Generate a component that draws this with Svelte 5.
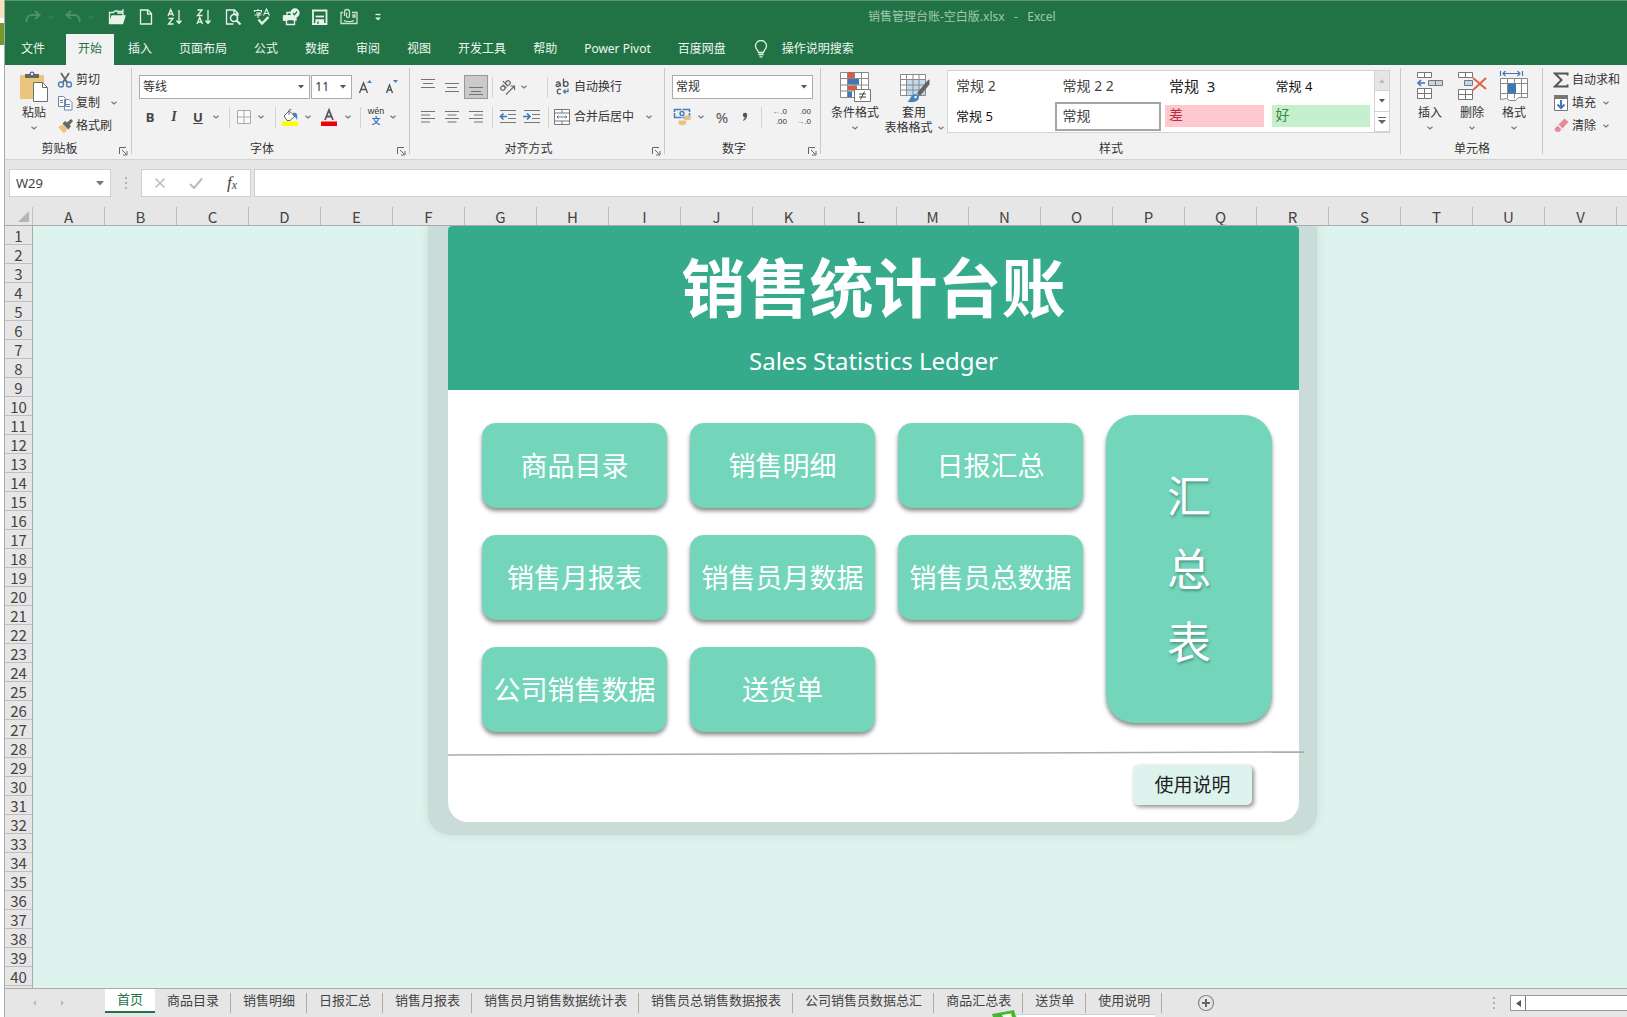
<script>
  const ribbonTabs = ['插入', '页面布局', '公式', '数据', '审阅', '视图', '开发工具', '帮助', 'Power Pivot', '百度网盘'];
  const quickTools = [
    ['open', '打开'], ['new', '新建'], ['az', '升序'], ['za', '降序'], ['preview', '打印预览'],
    ['spell', '拼写检查'], ['print', '快速打印'], ['save', '保存'], ['mail', '电子邮件'], ['more', '自定义']
  ];
  const columns = 'ABCDEFGHIJKLMNOPQRSTUV'.split('');
  const rows = Array.from({ length: 40 }, (_, i) => i + 1);
  const tiles = ['商品目录', '销售明细', '日报汇总', '销售月报表', '销售员月数据', '销售员总数据', '公司销售数据', '送货单'];
  const sheets = ['首页', '商品目录', '销售明细', '日报汇总', '销售月报表', '销售员月销售数据统计表', '销售员总销售数据报表', '公司销售员数据总汇', '商品汇总表', '送货单', '使用说明'];
  const styles = [
    ['常规 2', 'plain'], ['常规 2 2', 'plain'], ['常规  3', 'large'], ['常规 4', 'dark'],
    ['常规 5', 'dark'], ['常规', 'current'], ['差', 'bad'], ['好', 'good']
  ];
  let active = $state('首页');
  let cell = $state('W29');
  let formula = $state('');
</script>

{#snippet chevron()}
  <svg class="chev" width="6" height="4" viewBox="0 0 6 4"><path d="M.5.7 3 3 5.5.7" fill="none" stroke="#777" stroke-width="1.2" /></svg>
{/snippet}

{#snippet caret()}
  <svg class="caret" width="6" height="4" viewBox="0 0 6 4"><path d="M0 0h6L3 3.6z" fill="#555" /></svg>
{/snippet}

{#snippet launcher(label)}
  <button class="launch" aria-label={label}>
    <svg width="9" height="9" viewBox="0 0 9 9" fill="none" stroke="#666"><path d="M.5 7V.5H7M3 3l4 4M8 4v4H4" /></svg>
  </button>
{/snippet}

{#snippet lines(kind)}
  <svg width="16" height="16" viewBox="0 0 16 16" stroke="#737373" fill="none">
    {#if kind === 'top'}<path d="M1 .5h14M3 4.5h10M1 8.5h14" />
    {:else if kind === 'middle'}<path d="M1 4.5h14M3 8.5h10M1 12.5h14" />
    {:else if kind === 'bottom'}<path d="M1 8.5h14M3 12.5h10M1 15.5h14" />
    {:else if kind === 'left'}<path d="M1 2.5h14M1 6h9M1 9.5h14M1 13h9" />
    {:else if kind === 'center'}<path d="M1 2.5h14M3.500 6h9M1 9.5h14M3.500 13h9" />
    {:else}<path d="M1 2.500h14M6 6h9M1 9.5h14M6 13h9" />{/if}
  </svg>
{/snippet}

{#snippet quick(kind)}
  <svg width="18" height="18" viewBox="0 0 18 18" fill="none" stroke="#e6f2ea" stroke-width="1.3">
    {#if kind === 'open'}<path d="M1.500 15V4.500h4l1.500-1.500h3v2h5V8" /><path d="M1.500 15 4 8h13l-2.500 7.500h-13z" fill="#e6f2ea" /><path d="M11 3.500h4V1" />
    {:else if kind === 'new'}<path d="M3.500 2h7.500l3.500 3.500V16h-11zM10.500 2v4h4" />
    {:else if kind === 'az'}<path d="M2 8 4.700 1.500 7.500 8M3 6h3.500M2.500 10.500h4.500L2.500 16h5M13 2v13M10.500 12.500 13 15.500l2.500-3" />
    {:else if kind === 'za'}<path d="M2.500 2h4.500L2.500 7.500h5M2 16l2.700-6.500L7.500 16M3 14h3.500M13 2v13M10.500 12.500 13 15.500l2.500-3" />
    {:else if kind === 'preview'}<path d="M14 8V5.500L10.500 2h-8v14h7M10 2v4h4" /><circle cx="10" cy="10" r="3.500" stroke-width="1.600" /><path d="m12.500 12.500 4 4" stroke-width="2.200" />
    {:else if kind === 'spell'}<path d="M1.500 4V2.500h7V4M5 1v1.500M3 5h4.500L5 6.500V10M1.500 7h7M10.500 7.500 13.500 1l3 6.500M11.500 5.500h4" stroke-width="1.100" /><path d="m5.500 11.500 3.500 4 6.500-6.500" stroke-width="2.400" />
    {:else if kind === 'print'}<path d="M5 8V4.500h4M5 12H1.500V8h10M4.500 11.500v5h8v-5z" /><path d="M2 8h12v4h-2v-1H5v1H2z" fill="#e6f2ea" /><circle cx="13" cy="5" r="4" fill="#e6f2ea" /><path d="m11 5 1.500 1.800L15 3.500" stroke="#217346" />
    {:else if kind === 'save'}<path d="M2 2.500h13.500v13.500H2z" stroke-width="1.800" /><path d="M4.500 8.500h8.500" stroke-width="1.800" /><path d="M5 12h7.500v4H5z" fill="#e6f2ea" /><path d="M7 13.500v2.500" stroke="#217346" />
    {:else if kind === 'mail'}<g opacity=".85"><path d="M3 4.500H1v11h16v-11h-5M13 7h2v2h-2z" /><path d="M4.500 8V4a2.500 2.500 0 0 1 5 0v4a1.500 1.500 0 0 1-3 0V4.500M4 12.500c2 1.500 8 1.500 10 0" /></g>
    {:else if kind === 'more'}<path d="M6.500 6.500h5" /><path d="M6 9.500h6L9 12.500z" fill="#e6f2ea" stroke="none" />
    {:else if kind === 'redo'}<path d="M2.500 14c-.5-5 2-7 6-7h6M11 3l4.500 4-4.500 4" stroke="#4d8f69" stroke-width="2" />
    {:else}<path d="M15.500 14c.5-5-2-7-6-7h-6M7 3 2.500 7 7 11" stroke="#4d8f69" stroke-width="2" />{/if}
  </svg>
{/snippet}

<div class="screen">
  <div class="behind" aria-hidden="true"><i class="cream"></i><i class="olive"></i></div>
  <div class="window">
    <header>
      <div class="titlebar">
        <button class="w22" aria-label="恢复">{@render quick('redo')}</button>
        <button class="w14 dim" aria-label="恢复选项">{@render chevron()}</button>
        <button class="w22" aria-label="撤消">{@render quick('undo')}</button>
        <button class="w14 dim" aria-label="撤消选项">{@render chevron()}</button>
        {#each quickTools as [kind, label]}
          <button class="w29" aria-label={label}>{@render quick(kind)}</button>
        {/each}
        <span class="doc">销售管理台账-空白版.xlsx&nbsp;&nbsp; -&nbsp;&nbsp; Excel</span>
      </div>
      <nav class="tabs">
        <button class="file">文件</button>
        <button class="on">开始</button>
        {#each ribbonTabs as t}<button>{t}</button>{/each}
        <button class="tell">
          <svg width="14" height="18" viewBox="0 0 14 18" fill="none" stroke="#e6f2ea" stroke-width="1.300"><path d="M4.500 12.500C4.500 10 1.500 9.500 1.500 6a5.500 5.500 0 0 1 11 0c0 3.500-3 4-3 6.500zM4.500 14.500h5M5.500 16.800h3" /></svg>
          操作说明搜索
        </button>
      </nav>
    </header>

    <div class="ribbon">
      <section class="group clip">
        <div class="content">
          <button class="big paste">
            <svg width="30" height="32" viewBox="0 0 30 32"><path d="M1 4h24v24H1z" fill="#ecc57d" /><path d="M6 7V3h4.500a2.500 2.500 0 0 1 5 0H20v4z" fill="#666" /><circle cx="13" cy="3" r="1.200" fill="#f2f2f2" /><path d="M14.500 11.500h9l5 5v14h-14z" fill="#fff" stroke="#6e6e6e" /><path d="M23.500 11.500v5h5" fill="none" stroke="#6e6e6e" /></svg>
            <span>粘贴</span>{@render chevron()}
          </button>
          <div class="list">
            <button><svg width="16" height="16" viewBox="0 0 16 16" fill="none"><path d="M4 1l6.500 10M12 1 5.500 11" stroke="#666" stroke-width="1.800" /><circle cx="4" cy="12.500" r="2.500" stroke="#4a80b5" stroke-width="1.400" /><circle cx="12" cy="12.500" r="2.500" stroke="#4a80b5" stroke-width="1.400" /></svg>剪切</button>
            <button><svg width="16" height="16" viewBox="0 0 16 16" fill="#fff" stroke="#6f87a0"><path d="M1.500 1.500h5l2 2v8h-7zM7.500 4.500h4.500l3 3v7.500H7.500z" /><path d="M3 5.500h3M3 7.500h3M9 9.500h4M9 11.500h4" stroke="#4a80b5" /></svg>复制<i class="w22">{@render chevron()}</i></button>
            <button><svg width="16" height="16" viewBox="0 0 16 16"><path d="m1 9 5-2.500 4.500 4.500L7 15.500z" fill="#ecc57d" /><path d="M5.500 5.500 8 3l2 1.500L14 1l2 2-3.500 4L14 8l-2.500 3.500z" fill="#666" /></svg>格式刷</button>
          </div>
        </div>
        <div class="caption"><span>剪贴板</span>{@render launcher('剪贴板选项')}</div>
      </section>

      <section class="group font">
        <div class="content col">
          <div class="row">
            <label class="combo wide"><select aria-label="字体"><option>等线</option></select>{@render caret()}</label>
            <label class="combo size"><select aria-label="字号"><option>11</option></select>{@render caret()}</label>
            <button class="w26" aria-label="增大字号"><svg width="14" height="16" viewBox="0 0 14 16"><path d="M1.500 14 5.500 4l4 10M3 10.500h5" fill="none" stroke="#555" stroke-width="1.400" /><path d="m9 4 2.500-3L14 4z" fill="#4a80b5" /></svg></button>
            <button class="w26" aria-label="减小字号"><svg width="14" height="16" viewBox="0 0 14 16"><path d="M2.500 14 5.500 6l3 8M3.500 11h4" fill="none" stroke="#555" stroke-width="1.400" /><path d="m9 1 2.500 3L14 1z" fill="#4a80b5" /></svg></button>
          </div>
          <div class="row">
            <button class="w24 fmt b">B</button><button class="w24 fmt i">I</button><button class="w24 fmt u">U</button>
            <button class="w12" aria-label="下划线选项">{@render chevron()}</button><i class="sep w14"></i>
            <button class="w16" aria-label="边框"><svg width="14" height="14" viewBox="0 0 14 14" fill="#fafafa" stroke="#aaa"><path d="M.5.500h13v13H.5zM7 .5v13M.5 7h13" /></svg></button>
            <button class="w18" aria-label="边框选项">{@render chevron()}</button><i class="sep w10"></i>
            <button class="w20" aria-label="填充颜色"><svg width="18" height="18" viewBox="0 0 18 18"><path d="M1 13.500h16V18H1z" fill="#ff0" /><path d="m3 8 5-5 6 5-5 4.500H6z" fill="#fff" stroke="#666" /><path d="M8 7V2a1.500 1.500 0 0 1 2.500 0" fill="none" stroke="#666" /><path d="M12 5c4-1 5 2 4 7-1-2-2-4-4-4z" fill="#4a80b5" /></svg></button>
            <button class="w16" aria-label="填充选项">{@render chevron()}</button>
            <button class="w26" aria-label="字体颜色"><svg width="18" height="18" viewBox="0 0 18 18"><path d="M1 13.500h16V18H1z" fill="#f00008" /><path d="M5 12 9 2l4 10M6.500 8.500h5" fill="none" stroke="#5a5a5a" stroke-width="1.800" /></svg></button>
            <button class="w12" aria-label="颜色选项">{@render chevron()}</button><i class="sep w12"></i>
            <button class="w20 pinyin"><span>wén</span><b>文</b></button>
            <button class="w14" aria-label="拼音选项">{@render chevron()}</button>
          </div>
        </div>
        <div class="caption"><span>字体</span>{@render launcher('字体选项')}</div>
      </section>

      <section class="group align">
        <div class="content col">
          <div class="row">
            <button class="w24" aria-label="顶端对齐">{@render lines('top')}</button>
            <button class="w24" aria-label="垂直居中">{@render lines('middle')}</button>
            <button class="w24 pressed" aria-label="底端对齐">{@render lines('bottom')}</button><i class="sep w8"></i>
            <button class="w22" aria-label="方向"><svg width="17" height="17" viewBox="0 0 17 17" fill="none" stroke="#666" stroke-width="1.200"><g transform="rotate(-45 6 7)"><circle cx="3" cy="7" r="2.200" /><path d="M5.500 4.500v5M8 2v7.500" /><circle cx="10.200" cy="7" r="2.200" /></g><path d="M7 15.500 15 7.500M11.500 7h4v4" /></svg></button>
            <button class="w12" aria-label="方向选项">{@render chevron()}</button><i class="w12"></i><i class="sep w10"></i>
            <button class="text"><svg width="20" height="18" viewBox="0 0 20 18" fill="none" stroke="#555" stroke-width="1.300"><path d="M4 4.500c3.500-1.500 4.500 0 4.500 4M8.500 6C3 5 3 9.500 6.500 8.300l2-1.300M11.500.5v8" /><circle cx="13.800" cy="6" r="2.300" /><path d="M9 11.500c-5-2-5 6 0 4" /><path d="M16 10.500v3h-4M13.500 11.500l-2 2 2 2" stroke="#4a80b5" /></svg>自动换行</button>
          </div>
          <div class="row">
            <button class="w24" aria-label="左对齐">{@render lines('left')}</button>
            <button class="w24" aria-label="居中">{@render lines('center')}</button>
            <button class="w24" aria-label="右对齐">{@render lines('right')}</button><i class="sep w8"></i>
            <button class="w24" aria-label="减少缩进"><svg width="18" height="14" viewBox="0 0 18 14" fill="none" stroke="#777"><path d="M1 .5h16M9 4.500h8M9 8.500h8M1 12.500h16" /><path d="M1.500 6.500H8M4.500 3.500l-3 3 3 3" stroke="#3b78b8" stroke-width="1.600" /></svg></button>
            <button class="w24" aria-label="增加缩进"><svg width="18" height="14" viewBox="0 0 18 14" fill="none" stroke="#777"><path d="M1 .5h16M9 4.500h8M9 8.500h8M1 12.500h16" /><path d="M0 6.500h7M4 3.500l3 3-3 3" stroke="#3b78b8" stroke-width="1.600" /></svg></button><i class="sep w8"></i>
            <button class="text"><svg width="20" height="16" viewBox="0 0 20 16" fill="#fff" stroke="#777"><path d="M2.500.5h15v15h-15zM2.500 4h15M2.500 12h15M10 .5V4M10 12v3.500" /><path d="M5 8h10M6.500 6.500 5 8l1.500 1.500M13.500 6.500 15 8l-1.500 1.500" stroke="#4a80b5" fill="none" /></svg>合并后居中<i class="w26">{@render chevron()}</i></button>
          </div>
        </div>
        <div class="caption"><span>对齐方式</span>{@render launcher('对齐选项')}</div>
      </section>

      <section class="group number">
        <div class="content col">
          <div class="row"><label class="combo full"><select aria-label="数字格式"><option>常规</option></select>{@render caret()}</label></div>
          <div class="row">
            <button class="w22" aria-label="会计格式"><svg width="18" height="18" viewBox="0 0 18 18"><path d="M1.500 1.500h15v8h-15z" fill="#e8eff6" stroke="#4a80b5" stroke-width="1.600" /><path d="M0 4.500h3M15 4.500h3M9 0v3M9 8v3" stroke="#f2f2f2" /><circle cx="9" cy="5.500" r="2" fill="none" stroke="#4a80b5" stroke-width="1.400" /><path d="M11 7.500h6.500V12H11zM5.500 12.500H13V16l-3.500 1.500L5.500 16z" fill="#ecc08a" /></svg></button>
            <button class="w16" aria-label="货币选项">{@render chevron()}</button>
            <button class="w26 pct">%</button>
            <button class="w20" aria-label="千位分隔"><svg width="8" height="10" viewBox="0 0 8 10"><circle cx="4" cy="3" r="2.200" fill="#555" /><path d="M6 3c0 3-1 4.500-3.500 6L2 8c1.300-1 1.800-2 1.800-3.500z" fill="#555" /></svg></button><i class="sep w12"></i>
            <button class="w20 dec"><span><b>←</b>.0</span><span>.00</span></button>
            <button class="w24 dec"><span>.00</span><span><b>→</b>.0</span></button>
          </div>
        </div>
        <div class="caption"><span>数字</span>{@render launcher('数字选项')}</div>
      </section>

      <section class="group styles">
        <div class="content">
          <button class="big cond">
            <svg width="32" height="32" viewBox="0 0 32 32"><path d="M1.500 1.500h28v25h-28zM8.500 1.500v25M15.500 1.500v25M22.500 1.500v25M1.500 7.500h28M1.500 14h28M1.500 20h28" fill="#fff" stroke="#8a8a8a" /><path d="M9 1h6v6H9zM9 14.500h9v5H9z" fill="#d0603f" /><path d="M9 8h11v5.500H9zM9 20.500h4V26H9z" fill="#3f78b4" /><path d="M15.500 18.500h16v12h-16z" fill="#fff" stroke="#777" /><path d="M20 23h7M20 26h7M25.500 20.500l-4 8" fill="none" stroke="#444" /></svg>
            <span>条件格式</span>{@render chevron()}
          </button>
          <button class="big fmtTable">
            <svg width="32" height="32" viewBox="0 0 32 32"><path d="M2.500 3.500h25v21h-25z" fill="#fff" /><path d="M9 9h18v15H9z" fill="#c5d9ee" /><path d="M2.500 3.500h25v21h-25zM8.500 3.500v21M15 3.500v21M21 3.500v21M2.500 8.500h25M2.500 14h25M2.500 19h25" fill="none" stroke="#8a8a8a" /><path d="m19 22 11-13 1.500-.5v5L22 25z" fill="#666" /><path d="M9 31c3-1 3-7 8-8 4 0 5 3 3 6-3 3-7 2-11 2z" fill="#4583bf" /><circle cx="17.500" cy="26" r="1.200" fill="#fff" /></svg>
            <span>套用</span><span class="second">表格格式{@render chevron()}</span>
          </button>
          <div class="gallery">
            <div class="cells">
              {#each styles as [name, kind]}<button class={kind}>{name}</button>{/each}
            </div>
            <div class="scroller">
              <button class="off" aria-label="上一行"><svg width="6" height="4" viewBox="0 0 6 4"><path d="M0 4h6L3 0z" fill="#bbb" /></svg></button>
              <button aria-label="下一行">{@render caret()}</button>
              <button aria-label="其他"><svg width="8" height="8" viewBox="0 0 8 8"><path d="M0 0h8v1H0zM0 3h8L4 7z" fill="#666" /></svg></button>
            </div>
          </div>
        </div>
        <div class="caption"><span>样式</span></div>
      </section>

      <section class="group cellsGroup">
        <div class="content">
          <button class="big narrow">
            <svg width="30" height="32" viewBox="0 0 30 32" fill="#fff" stroke="#777"><path d="M2.500 1.500h14v5h-14zM9.500 1.500v5M2.500 17.500h14v10h-14zM9.500 17.500v10M2.500 22.500h14" /><path d="M13.500 9.500h14v5h-14zM20.500 9.500v5" fill="#c5d6e6" /><path d="M3 12h7M6 9l-3 3 3 3" fill="none" stroke="#3f78b4" stroke-width="1.600" /></svg>
            <span>插入</span>{@render chevron()}
          </button>
          <button class="big narrow">
            <svg width="30" height="32" viewBox="0 0 30 32" fill="#fff" stroke="#777"><path d="M1.500 1.500h14v5h-14zM8.500 1.500v5M1.500 18.500h14v10h-14zM8.500 18.500v10M1.500 23.500h14" /><path d="M7.500 9.500h8v5h-8z" fill="#c5d6e6" /><path d="m16 7 13 11M29 7 16 19" fill="none" stroke="#dd6444" stroke-width="2" /></svg>
            <span>删除</span>{@render chevron()}
          </button>
          <button class="big narrow">
            <svg width="30" height="32" viewBox="0 0 30 32" fill="#fff" stroke="#888"><path d="M1.500 7.500h27v19h-9l-3 3h-6l-3-2-6 1zM8.500 7.500v20M15.500 7.500v20M22.500 7.500v19M1.500 12.500h27M1.500 22.500h27" /><path d="M9 12.500h8v10H9z" fill="#3f78b4" stroke="none" /><path d="M1.500 0v5M23.500 0v5M4 2.500h17M6.500 0 4 2.500 6.500 5M18.500 0 21 2.500 18.500 5" fill="none" stroke="#3f78b4" stroke-width="1.200" /></svg>
            <span>格式</span>{@render chevron()}
          </button>
        </div>
        <div class="caption"><span>单元格</span></div>
      </section>

      <section class="group edit">
        <div class="content">
          <div class="list">
            <button><svg width="16" height="16" viewBox="0 0 16 16" fill="none" stroke="#555" stroke-width="2"><path d="M14.500 3.500V1.500H2L8.500 8 2 14.500h12.500v-2" /></svg>自动求和</button>
            <button><svg width="16" height="16" viewBox="0 0 16 16"><path d="M1.500 1h13v14.500h-13z" fill="#fff" stroke="#777" /><path d="M1 0h14v4H1z" fill="#777" /><path d="M8 5v8M4.500 9.500 8 13l3.500-3.500" fill="none" stroke="#3f78b4" stroke-width="2" /></svg>填充<i class="w14">{@render chevron()}</i></button>
            <button><svg width="16" height="16" viewBox="0 0 16 16"><path d="m5.500 6.500 6-6 4 3.500-6 6.500z" fill="#e8899a" /><path d="m4.500 7.500 4 4-2.500 2.500-3.500-.5L1.500 11z" fill="#e8899a" /></svg>清除<i class="w14">{@render chevron()}</i></button>
          </div>
        </div>
      </section>
    </div>

    <div class="formula">
      <label class="namebox"><input aria-label="名称框" bind:value={cell} /><svg width="8" height="5" viewBox="0 0 8 5"><path d="M0 0h8L4 4.500z" fill="#777" /></svg></label>
      <i class="dots"></i>
      <div class="fx">
        <button aria-label="取消"><svg width="12" height="12" viewBox="0 0 12 12"><path d="m1.500 1.500 9 9m0-9-9 9" stroke="#bbb" stroke-width="1.500" /></svg></button>
        <button aria-label="输入"><svg width="14" height="12" viewBox="0 0 14 12"><path d="m1 7 4 4 8-9.500" stroke="#bbb" stroke-width="2" fill="none" /></svg></button>
        <button class="fn">f<small>x</small></button>
      </div>
      <input class="bar" aria-label="编辑栏" bind:value={formula} />
    </div>

    <div class="colheads">
      <button class="corner" aria-label="全选"><svg width="11" height="11" viewBox="0 0 11 11"><path d="M11 0v11H0z" fill="#b5b5b5" /></svg></button>
      {#each columns as c}<div class="colhead">{c}</div>{/each}
    </div>

    <div class="sheet">
      <div class="rowheads">{#each rows as r}<div>{r}</div>{/each}</div>
      <div class="canvas">
        <main class="frame">
          <div class="card">
            <div class="banner"><h1>销售统计台账</h1><p>Sales Statistics Ledger</p></div>
            <div class="body">
              <div class="tiles">{#each tiles as t}<button>{t}</button>{/each}</div>
              <button class="summary"><span>汇</span><span>总</span><span>表</span></button>
            </div>
            <svg class="rule" viewBox="0 0 855 5" preserveAspectRatio="none"><path d="M0 4 855 1" stroke="#a9adac" stroke-width="1.500" /></svg>
            <div class="foot"><button>使用说明</button></div>
          </div>
        </main>
      </div>
    </div>

    <footer>
      <div class="nav">
        <button class="w28" aria-label="向左"><svg width="5" height="8" viewBox="0 0 5 8"><path d="M4 1 1 4l3 3z" fill="#bbb" /></svg></button>
        <button class="w28" aria-label="向右"><svg width="5" height="8" viewBox="0 0 5 8"><path d="m1 1 3 3-3 3z" fill="#bbb" /></svg></button>
      </div>
      {#each sheets as s}<button class="sheetTab" class:active={active === s} onclick={() => (active = s)}>{s}</button>{/each}
      <button class="add" aria-label="新工作表"><svg width="18" height="18" viewBox="0 0 18 18" fill="none" stroke="#888"><circle cx="9" cy="9" r="7.500" stroke-width="1.200" /><path d="M9 5v8M5 9h8" stroke="#666" stroke-width="2" /></svg></button>
      <i class="dots"></i>
      <div class="scroll"><button aria-label="向左滚动"><svg width="5" height="7" viewBox="0 0 5 7"><path d="M5 0v7L0 3.500z" fill="#555" /></svg></button></div>
      <div class="popup" aria-hidden="true"><svg width="26" height="7" viewBox="0 0 26 7"><path d="M1 4 23 0l2 7H2z" fill="#45b832" /><path d="m11 5 9-1.500L21 7h-9z" fill="#fff" /></svg><i></i></div>
    </footer>
  </div>
</div>

<style>
  :global(body) { background: #fff; overflow: hidden; }
  * { box-sizing: border-box; }
  .screen { display: flex; height: 100vh; font: 12px/16px "Noto Sans", "Noto Sans CJK SC", sans-serif; color: #333; }
  button, input, select { font: inherit; color: inherit; background: none; border: 0; padding: 0; margin: 0; border-radius: 0; }
  button { display: flex; align-items: center; justify-content: center; white-space: nowrap; flex: none; }
  input, select { min-width: 0; outline: 0; }
  select { appearance: none; }
  i { font-style: normal; }
  svg { display: block; flex: none; }

  .behind { width: 4px; flex: none; display: flex; flex-direction: column; }
  .behind i { display: block; }
  .cream { height: 18px; background: #f6e3bd; }
  .olive { height: 22px; margin-top: 5px; background: #76972a; }
  .window { flex: 1; min-width: 0; display: flex; flex-direction: column; border-left: 1px solid #ababab; overflow: hidden; }

  header { background: #217346; border-top: 1px solid #5c9374; flex: none; margin-left: -1px; padding-left: 1px; }
  .titlebar { height: 33px; display: flex; align-items: center; padding: 0 0 2px 17px; }
  .titlebar .dim { opacity: .45; margin-right: 4px; }
  .doc { margin-left: 476px; color: #a3c7b1; white-space: nowrap; }
  .tabs { display: flex; gap: 1px; height: 31px; color: #eef6f1; }
  .tabs button { padding: 0 13px 2px; }
  .tabs .file { width: 60px; padding: 0 4px 2px 0; }
  .tabs .on { background: #f2f2f2; color: #217346; padding: 0 12px 2px; }
  .tabs .tell { gap: 14px; padding-left: 14px; }

  .w8 { width: 8px; } .w10 { width: 10px; } .w12 { width: 12px; } .w14 { width: 14px; } .w16 { width: 16px; }
  .w18 { width: 18px; } .w20 { width: 20px; } .w22 { width: 22px; } .w24 { width: 24px; } .w26 { width: 26px; }
  .w28 { width: 28px; } .w29 { width: 29px; }
  i[class^='w'] { flex: none; display: flex; justify-content: center; }

  .ribbon { display: flex; height: 95px; flex: none; background: #f2f2f2; border-bottom: 1px solid #d2d2d2; overflow: hidden; }
  .group { position: relative; display: flex; flex-direction: column; flex: none; }
  .group::after { content: ""; position: absolute; right: 0; top: 3px; bottom: 5px; width: 1px; background: #c8c8c8; }
  .clip { width: 127px; } .font { width: 278px; } .align { width: 255px; } .number { width: 156px; }
  .styles { width: 580px; } .cellsGroup { width: 142px; } .edit { flex: 1 0 84px; }
  .edit::after { display: none; }
  .content { height: 73px; display: flex; }
  .content.col { flex-direction: column; padding: 7px 6px 0; }
  .row { display: flex; align-items: center; height: 30px; }
  .caption { display: flex; height: 21px; align-items: center; text-align: center; }
  .caption span { flex: 1; }
  .launch { width: 18px; padding-top: 5px; }
  .sep { display: flex; justify-content: center; flex: none; }
  .sep::before { content: ""; width: 1px; height: 21px; background: #d2d2d2; }
  .big { flex-direction: column; justify-content: flex-start; padding-top: 6px; }
  .big span { margin-top: 2px; }
  .big > .chev { margin-top: 5px; }
  .paste { width: 52px; padding-left: 6px; }
  .cond { width: 56px; margin-left: 6px; }
  .fmtTable { width: 62px; }
  .big .second { margin-top: -1px; display: flex; align-items: center; gap: 5px; }
  .narrow { width: 42px; }
  .cellsGroup .content { padding-left: 8px; }
  .list { display: flex; flex-direction: column; padding-top: 3px; }
  .list button { height: 23px; gap: 3px; justify-content: flex-start; }
  .edit .list { padding-left: 10px; }

  .combo { display: flex; align-items: center; height: 24px; background: #fff; border: 1px solid #ababab; padding: 0 5px 0 3px; }
  .combo select { flex: 1; }
  .wide { width: 173px; margin: 0 1px; }
  .size { width: 41px; }
  .full { width: 141px; margin-left: 1px; }
  .fmt { font-size: 13px; color: #444; }
  .b { font-weight: 700; } .i { font-family: "Liberation Serif", serif; font-style: italic; font-weight: 700; font-size: 14px; } .u { text-decoration: underline; font-weight: 700; }
  .pinyin { flex-direction: column; font-family: "Liberation Sans", "Noto Sans CJK SC", sans-serif; font-size: 9px; line-height: 8px; }
  .pinyin b { color: #3f78b4; font-size: 9px; line-height: 13px; }
  .pressed { height: 24px; background: #cacaca; border: 1px solid #999; }
  .text { gap: 2px; }
  .pct { font-size: 15px; color: #555; }
  .dec { flex-direction: column; align-items: flex-end; font: 8px/10px "Liberation Sans", sans-serif; }
  .dec b { color: #3f78b4; }

  .gallery { display: flex; width: 443px; height: 63px; margin: 5px 0 0 2px; background: #fff; border: 1px solid #d2d2d2; }
  .cells { flex: 1; display: grid; grid-template-columns: repeat(4, 1fr); grid-template-rows: 31px 29px; font-size: 14px; color: #444; }
  .cells button { justify-content: flex-start; padding: 0 0 2px 8px; white-space: pre; }
  .cells .large { font-size: 15px; color: #222; } .cells .dark { font-size: 13px; color: #111; }
  .cells .current { border: 2px solid #a6a6a6; padding-left: 6px; }
  .cells .bad, .cells .good { height: 22px; margin: 3px 4px 0 4px; padding-left: 4px; background: #ffc7ce; color: #b3303c; }
  .cells .good { background: #c6efce; color: #3c8a3c; }
  .scroller { width: 15px; border-left: 1px solid #d2d2d2; display: flex; flex-direction: column; }
  .scroller button { flex: 1; border-bottom: 1px solid #d2d2d2; }
  .scroller .off { background: #e6e6e6; }

  .formula { display: flex; align-items: center; height: 47px; padding: 9px 0 10px 4px; background: #e6e6e6; flex: none; }
  .namebox { width: 102px; height: 28px; display: flex; align-items: center; background: #fff; border: 1px solid #cfcfcf; padding: 0 6px; font-size: 13px; color: #444; }
  .namebox input { flex: 1; }
  .dots { width: 30px; display: flex; justify-content: center; align-items: center; }
  .dots::before { content: ""; width: 2px; height: 12px; background: repeating-linear-gradient(#b0b0b0 0 2px, transparent 2px 5px); }
  .fx { width: 110px; height: 28px; display: flex; align-items: center; background: #fff; border: 1px solid #cfcfcf; }
  .fx button { flex: 1; }
  .fn { font: italic 17px "Liberation Serif", serif; color: #444; }
  .fn small { font-size: 12px; padding-top: 4px; }
  .bar { flex: 1; height: 28px; margin-left: 3px; background: #fff; border: 1px solid #cfcfcf; border-right: 0; padding: 0 6px; }

  .colheads { display: flex; height: 19px; background: #e6e6e6; border-bottom: 1px solid #ababab; overflow: hidden; flex: none; }
  .corner { width: 28px; border-right: 1px solid #c2c2c2; justify-content: flex-end; padding-right: 3px; }
  .colhead { width: 72px; flex: none; text-align: center; border-right: 1px solid #bdbdbd; }
  .colhead, .rowheads { font: 15px/19px "Noto Sans CJK SC", sans-serif; color: #444; }
  .sheet { flex: 1; min-height: 0; display: flex; overflow: hidden; }
  .rowheads { width: 28px; flex: none; background: #e6e6e6; border-right: 1px solid #ababab; text-align: center; }
  .rowheads div { height: 19px; line-height: 20px; border-bottom: 1px solid #bfbfbf; }
  .canvas { flex: 1; min-width: 0; background: #dcf4ed; padding-left: 395px; }
  .frame { width: 889px; padding: 0 18px 13px 20px; background: #c9dcd8; border-radius: 0 0 22px 22px; box-shadow: 0 0 8px #c9dcd8; }
  .card { background: #fff; border-radius: 3px 3px 20px 20px; }
  .banner { height: 164px; background: #35ab8c; border-radius: 4px 4px 0 0; color: #fff; text-align: center; padding-top: 18px; }
  h1 { margin: 0; font: 700 64px/80px "Noto Sans CJK SC", sans-serif; }
  .banner p { margin: 19px 0 0; font-size: 24px; line-height: 36px; }
  .body { height: 361px; display: flex; align-items: flex-start; gap: 23px; padding: 25px 0 0 34px; }
  .tiles { display: grid; grid-template-columns: repeat(3, 185px); gap: 27px 23px; padding-top: 8px; }
  .tiles button, .summary { background: #73d6ba; color: #fff; box-shadow: 0 3px 4px #8d8d8d; }
  .tiles button { height: 85px; border-radius: 14px; font-size: 27px; line-height: 36px; }
  .summary { width: 166px; height: 308px; border-radius: 28px; flex-direction: column; font-size: 44px; line-height: 73px; text-shadow: 1px 2px 3px #4d9480; }
  .rule { width: calc(100% + 5px); height: 5px; }
  .foot { height: 66px; display: flex; justify-content: flex-end; padding: 9px 47px 0 0; }
  .foot button { width: 119px; height: 40px; border-radius: 5px; background: #dcf4ed; color: #222; font-size: 19px; line-height: 24px; box-shadow: 2px 2px 4px #8d8d8d; }

  footer { position: relative; display: flex; height: 29px; flex: none; background: #e6e6e6; border-top: 1px solid #ababab; font-size: 13px; color: #444; overflow: hidden; }
  .nav { display: flex; width: 100px; padding-left: 15px; }
  .sheetTab { position: relative; height: 24px; padding: 0 12px 2px; }
  .sheetTab::after { content: ""; position: absolute; right: 0; top: 4px; bottom: 0; width: 1px; background: #ababab; }
  .active { margin-top: -1px; height: 25px; background: #fff; color: #217346; border-bottom: 2px solid #217346; }
  .active::after { display: none; }
  .add { margin-left: 34px; width: 20px; }
  footer .dots { margin-left: auto; margin-right: 1px; }
  .scroll { width: 117px; height: 16px; margin-top: 6px; border: 1px solid #999; border-right: 0; background: #fff; }
  .scroll button { width: 15px; height: 14px; border-right: 1px solid #777; }
  .popup { position: absolute; left: 986px; bottom: 0; display: flex; align-items: flex-end; }
  .popup i { width: 138px; height: 3px; background: #fff; border-top: 1px solid #c5d0da; }
</style>
